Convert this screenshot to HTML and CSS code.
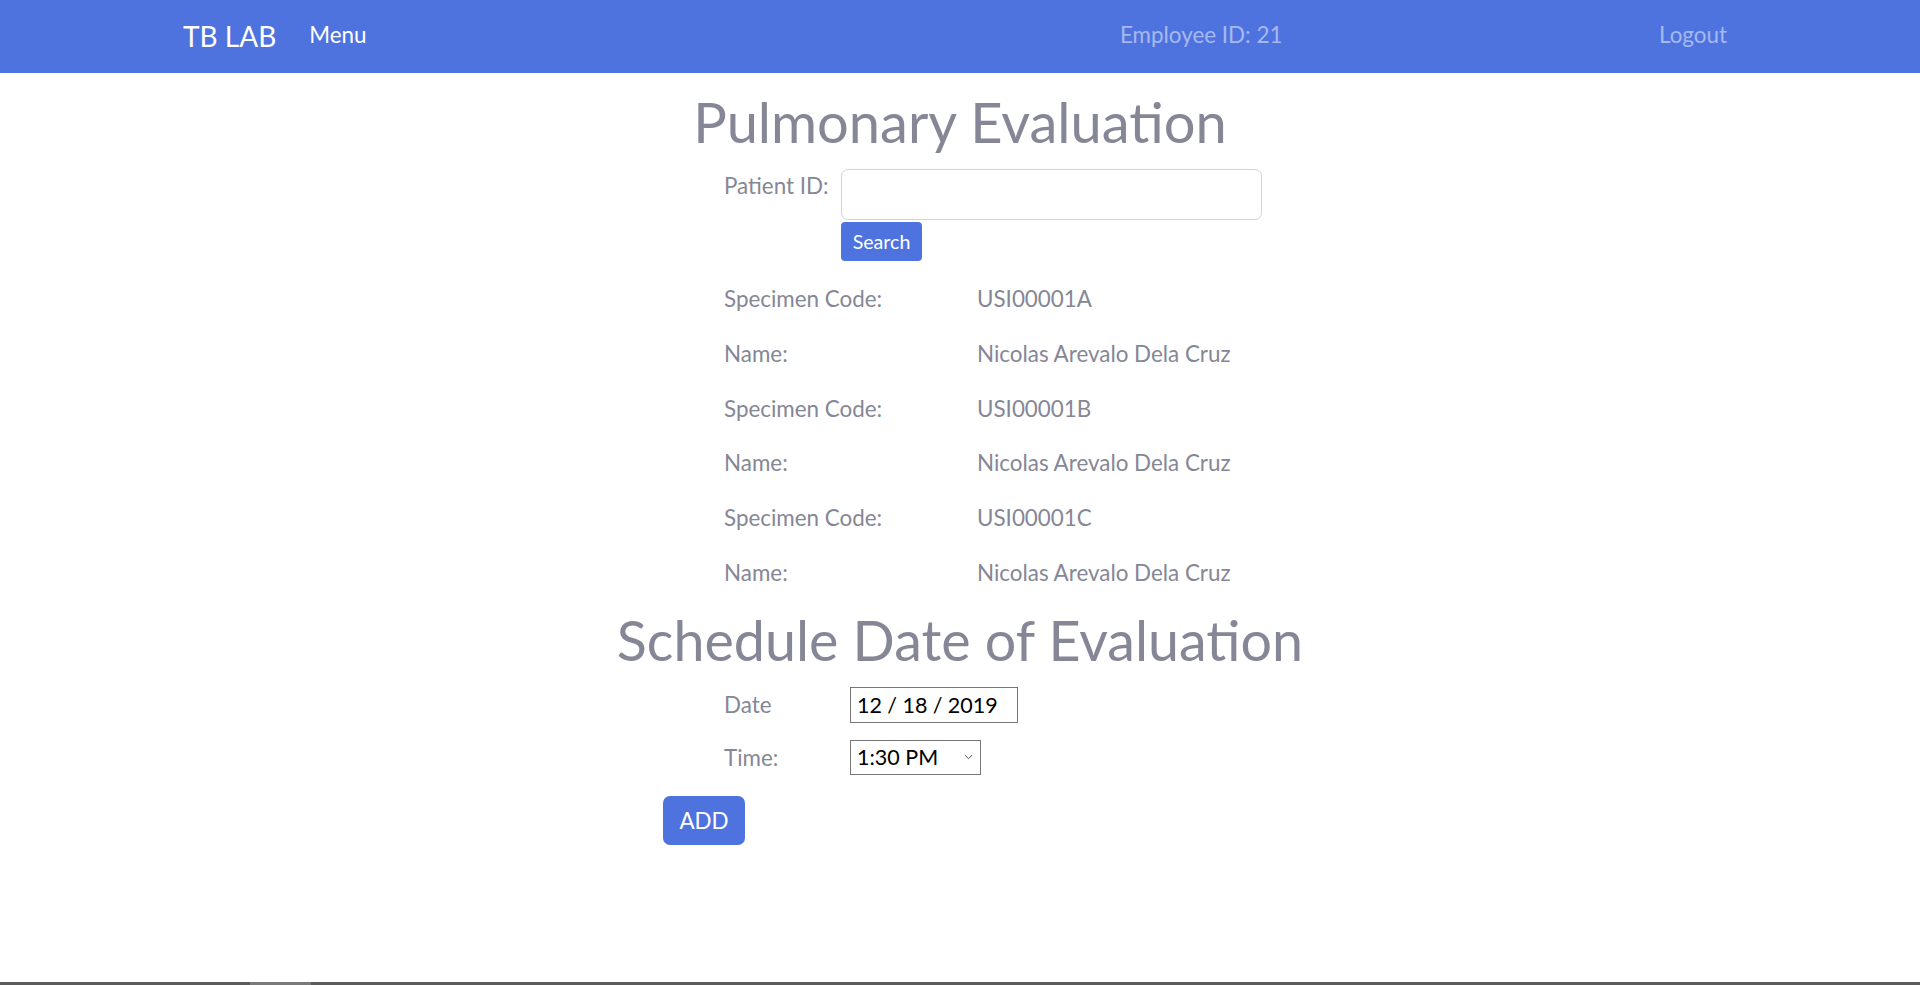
FILE: index.html
```html
<!DOCTYPE html>
<html lang="en">
<head>
<meta charset="utf-8">
<title>Pulmonary Evaluation</title>
<link rel="stylesheet" href="styles.css">
</head>
<body>
<div class="page">
  <nav class="navbar">
    <div class="nav-left">
      <a class="brand" href="#">TB LAB</a>
      <a class="nav-link menu" href="#">Menu</a>
    </div>
    <span class="nav-link muted emp">Employee ID: 21</span>
    <a class="nav-link muted logout" href="#">Logout</a>
  </nav>

  <main class="main">
    <h1 class="title">Pulmonary Evaluation</h1>
    <div class="panel">
      <div class="search-row">
        <label class="lbl-pid">Patient ID:</label>
        <div class="search-col">
          <input class="form-control" type="text">
          <button class="btn btn-sm">Search</button>
        </div>
      </div>

      <div class="info">
        <div class="info-row"><span class="info-lbl">Specimen Code:</span><span>USI00001A</span></div>
        <div class="info-row"><span class="info-lbl">Name:</span><span>Nicolas Arevalo Dela Cruz</span></div>
        <div class="info-row"><span class="info-lbl">Specimen Code:</span><span>USI00001B</span></div>
        <div class="info-row"><span class="info-lbl">Name:</span><span>Nicolas Arevalo Dela Cruz</span></div>
        <div class="info-row"><span class="info-lbl">Specimen Code:</span><span>USI00001C</span></div>
        <div class="info-row"><span class="info-lbl">Name:</span><span>Nicolas Arevalo Dela Cruz</span></div>
      </div>
    </div>

    <h1 class="title title2">Schedule Date of Evaluation</h1>
    <div class="panel">
      <div class="sched-row date-row">
        <span class="sched-lbl">Date</span>
        <input class="date-input" type="text" value="12&#8239;/&#8239;18&#8239;/&#8239;2019">
      </div>
      <div class="sched-row time-row">
        <span class="sched-lbl">Time:</span>
        <span class="select-wrap">
          <select class="time-select">
            <option>1:30 PM</option>
            <option>2:00 PM</option>
          </select>
          <svg class="chev" width="9" height="6" viewBox="0 0 9 6" aria-hidden="true"><path d="M0.8 1 L4.5 4.7 L8.2 1" fill="none" stroke="#555" stroke-width="1"/></svg>
        </span>
      </div>
      <button class="btn btn-add">ADD</button>
    </div>
  </main>

  <div class="hbar"><div class="hbar-thumb"></div></div>
</div>
</body>
</html>
```

FILE: styles.css
```css
* { box-sizing: border-box; }
html, body { margin: 0; padding: 0; }
body {
  font-family: Lato, "Open Sans", "Liberation Sans", sans-serif;
  color: #858796;
  background: #fff;
  font-size: 22.4px;
  line-height: 1.5;
}
.page {
  height: 985px;
  display: flex;
  flex-direction: column;
  overflow: hidden;
}
a { text-decoration: none; }

.navbar {
  height: 73px;
  flex: none;
  background: #4e73df;
  display: flex;
  align-items: center;
  padding: 0 183px 2px 183px;
}
.nav-left { flex: 1; display: flex; align-items: center; }
.brand {
  color: #fff;
  font-size: 28px;
  line-height: 1;
  margin-right: 33px;
}
.nav-link { color: #fff; font-size: 22.4px; line-height: 1; }
.muted { color: rgba(255,255,255,0.5); }
.emp { width: 538px; }
.logout { width: 69px; text-align: right; margin-right: 10px; }

.main { flex: 1; }
.title {
  margin: 15px 0 0 0;
  text-align: center;
  font-weight: 400;
  font-size: 56px;
  line-height: 1.2;
  color: #858796;
}
.title2 { margin-top: 18px; font-size: 55.6px; }

.panel { width: 700px; margin: 0 0 0 663px; }

.search-row { display: flex; align-items: flex-start; padding-left: 61px; margin-top: 14px; }
.lbl-pid { width: 117px; flex: none; line-height: 33px; }
.search-col { display: flex; flex-direction: column; align-items: flex-start; }
.form-control {
  width: 421px;
  height: 51px;
  border: 1px solid #d1d3e2;
  border-radius: 7px;
  font: inherit;
  padding: 6px 17px;
  color: #6e707e;
  outline: none;
}
.btn {
  border: none;
  background: #4e73df;
  color: #fff;
  font-family: inherit;
  cursor: pointer;
}
.btn-sm {
  margin-top: 2px;
  height: 39px;
  width: 81px;
  font-size: 19.6px;
  border-radius: 4px;
  padding: 0;
}

.info { padding-left: 61px; margin-top: 21px; }
.info-row { display: flex; line-height: 33.6px; margin-bottom: 21.1px; }
.info-row:last-child { margin-bottom: 0; }
.info-lbl { width: 253px; flex: none; }

.sched-row { display: flex; align-items: center; padding-left: 61px; }
.date-row { margin-top: 13px; }
.time-row { margin-top: 17px; }
.sched-lbl { width: 126px; flex: none; }
.date-input {
  width: 168px;
  height: 36px;
  border: 1px solid #767676;
  border-radius: 0;
  font-family: Lato, "Open Sans", sans-serif;
  font-size: 21.5px;
  color: #000;
  padding: 0 6px;
  outline: none;
}
.select-wrap { position: relative; display: inline-block; width: 131px; height: 35px; }
.time-select {
  -webkit-appearance: none;
  appearance: none;
  width: 131px;
  height: 35px;
  border: 1px solid #767676;
  border-radius: 0;
  background: #fff;
  font-family: Lato, "Open Sans", sans-serif;
  font-size: 21.5px;
  color: #000;
  padding: 0 6px;
  outline: none;
}
.chev { position: absolute; right: 8px; top: 14px; pointer-events: none; }
.btn-add {
  margin-top: 21px;
  width: 82px;
  height: 49px;
  font-size: 22.4px;
  border-radius: 7px;
  padding: 0;
}

.hbar { flex: none; height: 3px; background: #5b5b5b; }
.hbar-thumb { width: 61px; height: 3px; margin-left: 250px; background: #7a7a7a; }
```
